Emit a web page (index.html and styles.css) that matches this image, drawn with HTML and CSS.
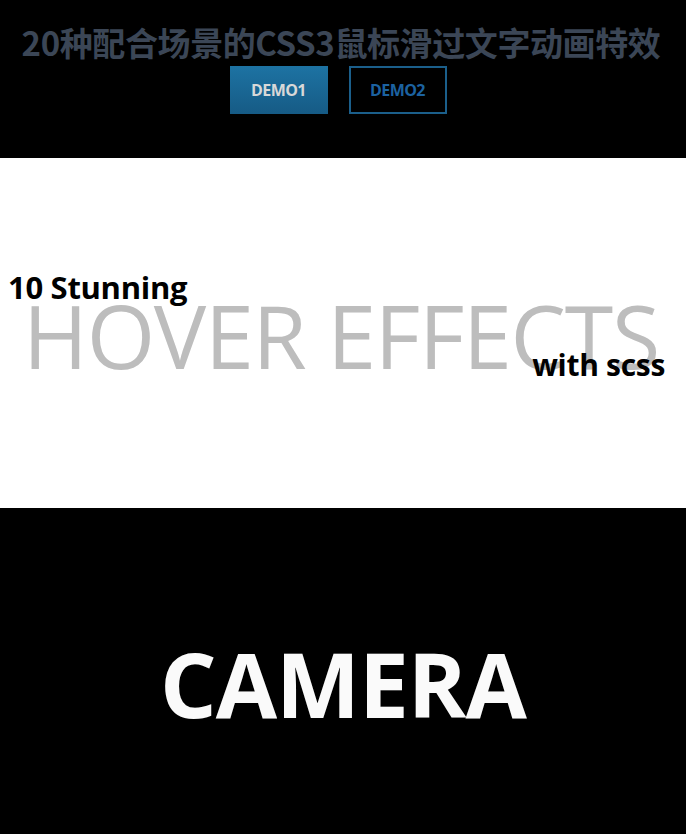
FILE: index.html
```html
<!DOCTYPE html>
<html lang="zh-CN">
<head>
<meta charset="utf-8">
<title>20种配合场景的CSS3鼠标滑过文字动画特效</title>
<link rel="stylesheet" href="styles.css">
</head>
<body>
<header class="top">
  <h1 class="title">20种配合场景的CSS3鼠标滑过文字动画特效</h1>
  <nav class="demos">
    <a class="btn btn-fill" href="#">DEMO1</a>
    <a class="btn btn-line" href="#">DEMO2</a>
  </nav>
</header>
<section class="panel panel-light">
  <div class="hover-block">
    <div class="small small-left">10 Stunning</div>
    <div class="big">HOVER EFFECTS</div>
    <div class="small small-right">with scss</div>
  </div>
</section>
<section class="panel panel-dark">
  <div class="camera">CAMERA</div>
</section>
</body>
</html>
```
FILE: styles.css
```css
html, body {
  margin: 0;
  padding: 0;
  background: #000;
}
body {
  font-family: "Open Sans", "Noto Sans CJK SC", sans-serif;
  width: 686px;
  overflow: hidden;
}
.top {
  height: 158px;
  background: #000;
  text-align: center;
  padding-top: 22px;
  padding-right: 4px;
  box-sizing: border-box;
}
.title {
  margin: 0;
  font-family: "Noto Sans CJK SC", sans-serif;
  font-size: 33px;
  line-height: 40px;
  font-weight: 700;
  color: #3b4656;
  letter-spacing: -0.4px;
}
.demos {
  display: flex;
  justify-content: center;
  gap: 21px;
  margin-top: 4px;
  padding-right: 6px;
}
.btn {
  box-sizing: border-box;
  width: 98px;
  height: 48px;
  display: flex;
  align-items: center;
  justify-content: center;
  font-family: "Open Sans", sans-serif;
  font-weight: 700;
  font-size: 16px;
  letter-spacing: -0.6px;
  text-decoration: none;
}
.btn-fill {
  background: linear-gradient(#1d73a3, #165b85);
  color: #d8d8d8;
}
.btn-line {
  border: 2px solid #1b5f8b;
  color: #1c62a0;
}
.panel {
  display: flex;
  align-items: center;
  justify-content: center;
}
.panel-light {
  height: 350px;
  background: #fff;
}
.panel-dark {
  height: 326px;
  background: #000;
}
.hover-block {
  width: 670px;
  display: flex;
  flex-direction: column;
  margin-top: -14px;
}
.small {
  font-weight: 700;
  color: #000;
  line-height: 30px;
  position: relative;
  z-index: 1;
  letter-spacing: -0.3px;
}
.small-left {
  font-size: 31px;
  align-self: flex-start;
  margin-left: 0;
  margin-bottom: -12px;
}
.small-right {
  font-size: 30px;
  align-self: flex-end;
  margin-top: -30px;
  margin-right: 13px;
}
.big {
  font-size: 88px;
  font-weight: 400;
  color: #bdbdbd;
  line-height: 90px;
  text-align: center;
  letter-spacing: -1.3px;
  padding-right: 4px;
}
.camera {
  font-weight: 700;
  font-size: 89px;
  color: #fafafa;
  letter-spacing: -1px;
  margin-top: 24px;
}
```
